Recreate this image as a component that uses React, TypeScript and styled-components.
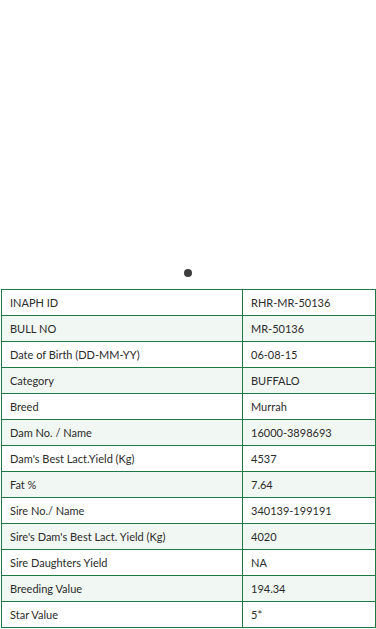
import styled, { createGlobalStyle } from 'styled-components';

const GlobalStyle = createGlobalStyle`
  html, body {
    margin: 0;
    padding: 0;
    background: #ffffff;
  }
  body {
    font-family: 'Lato', 'Liberation Sans', sans-serif;
  }
`;

const Page = styled.div`
  width: 376px;
  display: flex;
  flex-direction: column;
`;

const Slider = styled.div`
  height: 289px;
  display: flex;
  align-items: flex-end;
  justify-content: center;
  padding-bottom: 12px;
  box-sizing: border-box;
`;

const Dot = styled.span`
  width: 8px;
  height: 8px;
  border-radius: 50%;
  background: #3d3d3d;
`;

const Table = styled.table`
  margin-left: 1px;
  width: 375px;
  border-collapse: collapse;
  border: 1px solid #1d7a45;
  table-layout: fixed;
`;

const Row = styled.tr<{ $shaded: boolean }>`
  background: ${(p) => (p.$shaded ? '#f1f7f3' : '#ffffff')};
  height: 26px;
`;

const Cell = styled.td`
  border: 1px solid #1d7a45;
  padding: 0 0 0 8px;
  font-size: 11px;
  color: #2b2b2b;
  vertical-align: middle;
`;

const LabelCell = styled(Cell)`
  width: 232px;
`;

const rows: [string, string][] = [
  ['INAPH ID', 'RHR-MR-50136'],
  ['BULL NO', 'MR-50136'],
  ['Date of Birth (DD-MM-YY)', '06-08-15'],
  ['Category', 'BUFFALO'],
  ['Breed', 'Murrah'],
  ['Dam No. / Name', '16000-3898693'],
  ["Dam's Best Lact.Yield (Kg)", '4537'],
  ['Fat %', '7.64'],
  ['Sire No./ Name', '340139-199191'],
  ["Sire's Dam's Best Lact. Yield (Kg)", '4020'],
  ['Sire Daughters Yield', 'NA'],
  ['Breeding Value', '194.34'],
  ['Star Value', '5*'],
];

export default function App() {
  return (
    <>
      <GlobalStyle />
      <Page>
        <Slider>
          <Dot />
        </Slider>
        <Table>
          <tbody>
            {rows.map(([label, value], i) => (
              <Row key={label} $shaded={i % 2 === 1}>
                <LabelCell>{label}</LabelCell>
                <Cell>{value}</Cell>
              </Row>
            ))}
          </tbody>
        </Table>
      </Page>
    </>
  );
}
